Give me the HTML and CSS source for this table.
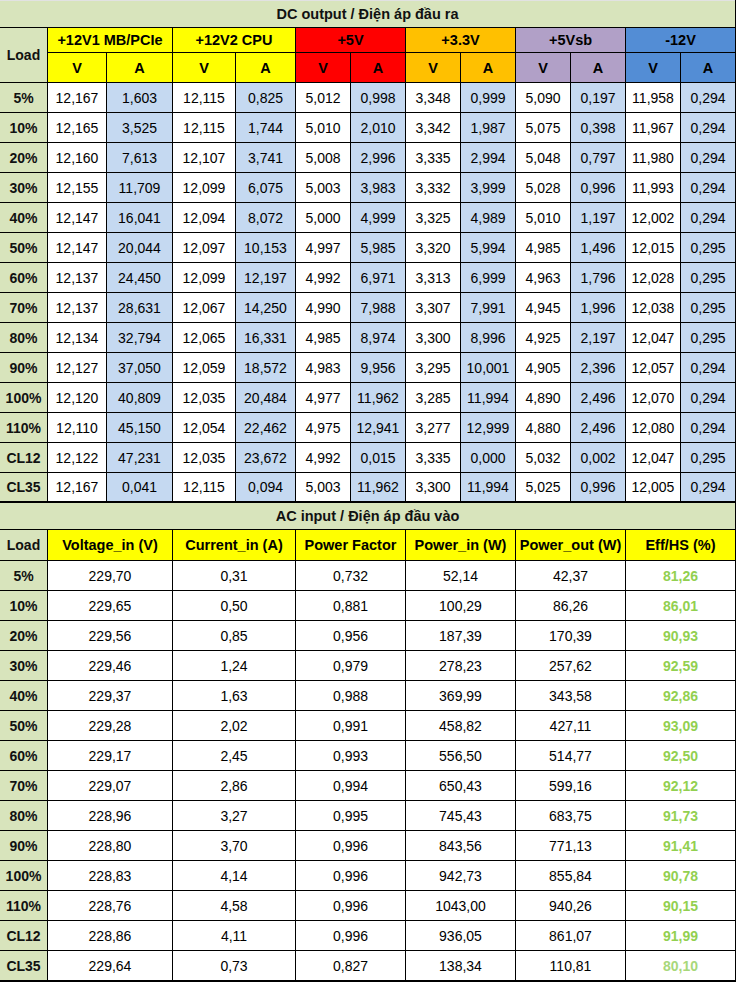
FILE: index.html
```html
<!DOCTYPE html>
<html>
<head>
<meta charset="utf-8">
<title>PSU test</title>
<link rel="stylesheet" href="styles.css">
</head>
<body>
<div class="sheet">
  <div class="title first">DC output / Điện áp đầu ra</div>
  <div class="load lhead">Load</div>
  <div class="grp y">+12V1 MB/PCIe</div>
  <div class="grp y">+12V2 CPU</div>
  <div class="grp r">+5V</div>
  <div class="grp o">+3.3V</div>
  <div class="grp p">+5Vsb</div>
  <div class="grp b">-12V</div>
  <div class="sub y">V</div><div class="sub y">A</div>
  <div class="sub y">V</div><div class="sub y">A</div>
  <div class="sub r">V</div><div class="sub r">A</div>
  <div class="sub o">V</div><div class="sub o">A</div>
  <div class="sub p">V</div><div class="sub p">A</div>
  <div class="sub b">V</div><div class="sub b">A</div>

  <div class="load">5%</div><div class="v">12,167</div><div class="a">1,603</div><div class="v">12,115</div><div class="a">0,825</div><div class="v">5,012</div><div class="a">0,998</div><div class="v">3,348</div><div class="a">0,999</div><div class="v">5,090</div><div class="a">0,197</div><div class="v">11,958</div><div class="a">0,294</div>
  <div class="load">10%</div><div class="v">12,165</div><div class="a">3,525</div><div class="v">12,115</div><div class="a">1,744</div><div class="v">5,010</div><div class="a">2,010</div><div class="v">3,342</div><div class="a">1,987</div><div class="v">5,075</div><div class="a">0,398</div><div class="v">11,967</div><div class="a">0,294</div>
  <div class="load">20%</div><div class="v">12,160</div><div class="a">7,613</div><div class="v">12,107</div><div class="a">3,741</div><div class="v">5,008</div><div class="a">2,996</div><div class="v">3,335</div><div class="a">2,994</div><div class="v">5,048</div><div class="a">0,797</div><div class="v">11,980</div><div class="a">0,294</div>
  <div class="load">30%</div><div class="v">12,155</div><div class="a">11,709</div><div class="v">12,099</div><div class="a">6,075</div><div class="v">5,003</div><div class="a">3,983</div><div class="v">3,332</div><div class="a">3,999</div><div class="v">5,028</div><div class="a">0,996</div><div class="v">11,993</div><div class="a">0,294</div>
  <div class="load">40%</div><div class="v">12,147</div><div class="a">16,041</div><div class="v">12,094</div><div class="a">8,072</div><div class="v">5,000</div><div class="a">4,999</div><div class="v">3,325</div><div class="a">4,989</div><div class="v">5,010</div><div class="a">1,197</div><div class="v">12,002</div><div class="a">0,294</div>
  <div class="load">50%</div><div class="v">12,147</div><div class="a">20,044</div><div class="v">12,097</div><div class="a">10,153</div><div class="v">4,997</div><div class="a">5,985</div><div class="v">3,320</div><div class="a">5,994</div><div class="v">4,985</div><div class="a">1,496</div><div class="v">12,015</div><div class="a">0,295</div>
  <div class="load">60%</div><div class="v">12,137</div><div class="a">24,450</div><div class="v">12,099</div><div class="a">12,197</div><div class="v">4,992</div><div class="a">6,971</div><div class="v">3,313</div><div class="a">6,999</div><div class="v">4,963</div><div class="a">1,796</div><div class="v">12,028</div><div class="a">0,295</div>
  <div class="load">70%</div><div class="v">12,137</div><div class="a">28,631</div><div class="v">12,067</div><div class="a">14,250</div><div class="v">4,990</div><div class="a">7,988</div><div class="v">3,307</div><div class="a">7,991</div><div class="v">4,945</div><div class="a">1,996</div><div class="v">12,038</div><div class="a">0,295</div>
  <div class="load">80%</div><div class="v">12,134</div><div class="a">32,794</div><div class="v">12,065</div><div class="a">16,331</div><div class="v">4,985</div><div class="a">8,974</div><div class="v">3,300</div><div class="a">8,996</div><div class="v">4,925</div><div class="a">2,197</div><div class="v">12,047</div><div class="a">0,295</div>
  <div class="load">90%</div><div class="v">12,127</div><div class="a">37,050</div><div class="v">12,059</div><div class="a">18,572</div><div class="v">4,983</div><div class="a">9,956</div><div class="v">3,295</div><div class="a">10,001</div><div class="v">4,905</div><div class="a">2,396</div><div class="v">12,057</div><div class="a">0,294</div>
  <div class="load">100%</div><div class="v">12,120</div><div class="a">40,809</div><div class="v">12,035</div><div class="a">20,484</div><div class="v">4,977</div><div class="a">11,962</div><div class="v">3,285</div><div class="a">11,994</div><div class="v">4,890</div><div class="a">2,496</div><div class="v">12,070</div><div class="a">0,294</div>
  <div class="load">110%</div><div class="v">12,110</div><div class="a">45,150</div><div class="v">12,054</div><div class="a">22,462</div><div class="v">4,975</div><div class="a">12,941</div><div class="v">3,277</div><div class="a">12,999</div><div class="v">4,880</div><div class="a">2,496</div><div class="v">12,080</div><div class="a">0,294</div>
  <div class="load">CL12</div><div class="v">12,122</div><div class="a">47,231</div><div class="v">12,035</div><div class="a">23,672</div><div class="v">4,992</div><div class="a">0,015</div><div class="v">3,335</div><div class="a">0,000</div><div class="v">5,032</div><div class="a">0,002</div><div class="v">12,047</div><div class="a">0,295</div>
  <div class="load">CL35</div><div class="v">12,167</div><div class="a">0,041</div><div class="v">12,115</div><div class="a">0,094</div><div class="v">5,003</div><div class="a">11,962</div><div class="v">3,300</div><div class="a">11,994</div><div class="v">5,025</div><div class="a">0,996</div><div class="v">12,005</div><div class="a">0,294</div>

  <div class="title second">AC input / Điện áp đầu vào</div>
  <div class="load">Load</div>
  <div class="ah y">Voltage_in (V)</div>
  <div class="ah y">Current_in (A)</div>
  <div class="ah y">Power Factor</div>
  <div class="ah y">Power_in (W)</div>
  <div class="ah y">Power_out (W)</div>
  <div class="ah y">Eff/HS (%)</div>

  <div class="load">5%</div><div class="c">229,70</div><div class="c">0,31</div><div class="c">0,732</div><div class="c">52,14</div><div class="c">42,37</div><div class="c e">81,26</div>
  <div class="load">10%</div><div class="c">229,65</div><div class="c">0,50</div><div class="c">0,881</div><div class="c">100,29</div><div class="c">86,26</div><div class="c e">86,01</div>
  <div class="load">20%</div><div class="c">229,56</div><div class="c">0,85</div><div class="c">0,956</div><div class="c">187,39</div><div class="c">170,39</div><div class="c e">90,93</div>
  <div class="load">30%</div><div class="c">229,46</div><div class="c">1,24</div><div class="c">0,979</div><div class="c">278,23</div><div class="c">257,62</div><div class="c e">92,59</div>
  <div class="load">40%</div><div class="c">229,37</div><div class="c">1,63</div><div class="c">0,988</div><div class="c">369,99</div><div class="c">343,58</div><div class="c e">92,86</div>
  <div class="load">50%</div><div class="c">229,28</div><div class="c">2,02</div><div class="c">0,991</div><div class="c">458,82</div><div class="c">427,11</div><div class="c e">93,09</div>
  <div class="load">60%</div><div class="c">229,17</div><div class="c">2,45</div><div class="c">0,993</div><div class="c">556,50</div><div class="c">514,77</div><div class="c e">92,50</div>
  <div class="load">70%</div><div class="c">229,07</div><div class="c">2,86</div><div class="c">0,994</div><div class="c">650,43</div><div class="c">599,16</div><div class="c e">92,12</div>
  <div class="load">80%</div><div class="c">228,96</div><div class="c">3,27</div><div class="c">0,995</div><div class="c">745,43</div><div class="c">683,75</div><div class="c e">91,73</div>
  <div class="load">90%</div><div class="c">228,80</div><div class="c">3,70</div><div class="c">0,996</div><div class="c">843,56</div><div class="c">771,13</div><div class="c e">91,41</div>
  <div class="load">100%</div><div class="c">228,83</div><div class="c">4,14</div><div class="c">0,996</div><div class="c">942,73</div><div class="c">855,84</div><div class="c e">90,78</div>
  <div class="load">110%</div><div class="c">228,76</div><div class="c">4,58</div><div class="c">0,996</div><div class="c">1043,00</div><div class="c">940,26</div><div class="c e">90,15</div>
  <div class="load">CL12</div><div class="c">228,86</div><div class="c">4,11</div><div class="c">0,996</div><div class="c">936,05</div><div class="c">861,07</div><div class="c e">91,99</div>
  <div class="load">CL35</div><div class="c">229,64</div><div class="c">0,73</div><div class="c">0,827</div><div class="c">138,34</div><div class="c">110,81</div><div class="c e faint">80,10</div>
</div>
</body>
</html>
```
FILE: styles.css
```css
html, body {
  margin: 0;
  padding: 0;
  background: #ffffff;
}

.sheet {
  width: 736px;
  box-sizing: border-box;
  padding: 0 1px 2px 0;
  background: #000000;
  display: grid;
  grid-template-columns: 47px 58px 65px 62px 59px 54px 54px 54px 54px 54px 54px 54px 54px;
  grid-template-rows: 27px 24px 29px repeat(13, 29px) 28px 27px 30px repeat(14, 29px);
  gap: 1px;
  font-family: "Liberation Sans", Arial, sans-serif;
  font-size: 14px;
  color: #000000;
}

.sheet > div {
  display: flex;
  align-items: center;
  justify-content: center;
  white-space: nowrap;
  box-sizing: border-box;
}

.title {
  grid-column: 1 / -1;
  background: #d8e4bc;
  font-weight: bold;
  font-size: 14.5px;
  color: #111111;
}

.title.first {
  border-top: 1px solid #e2e2e2;
}

.title.second {
  border-top: 1px solid #000000;
}

.load {
  background: #d8e4bc;
  font-weight: bold;
  color: #111111;
}

.lhead {
  grid-row: span 2;
}

.grp {
  grid-column: span 2;
  font-weight: bold;
  font-size: 14.5px;
}

.sub {
  font-weight: bold;
  font-size: 14.5px;
}

.ah {
  grid-column: span 2;
  font-weight: bold;
  font-size: 14.5px;
}

.y { background: #ffff00; }
.r { background: #ff0000; }
.o { background: #ffc000; }
.p { background: #b1a0c7; }
.b { background: #538dd5; }

.v { background: #ffffff; }
.a { background: #c5d9f1; }

.c {
  grid-column: span 2;
  background: #ffffff;
}

.e {
  color: #92d050;
  font-weight: bold;
}

.faint {
  color: #a8d87a;
}
```
